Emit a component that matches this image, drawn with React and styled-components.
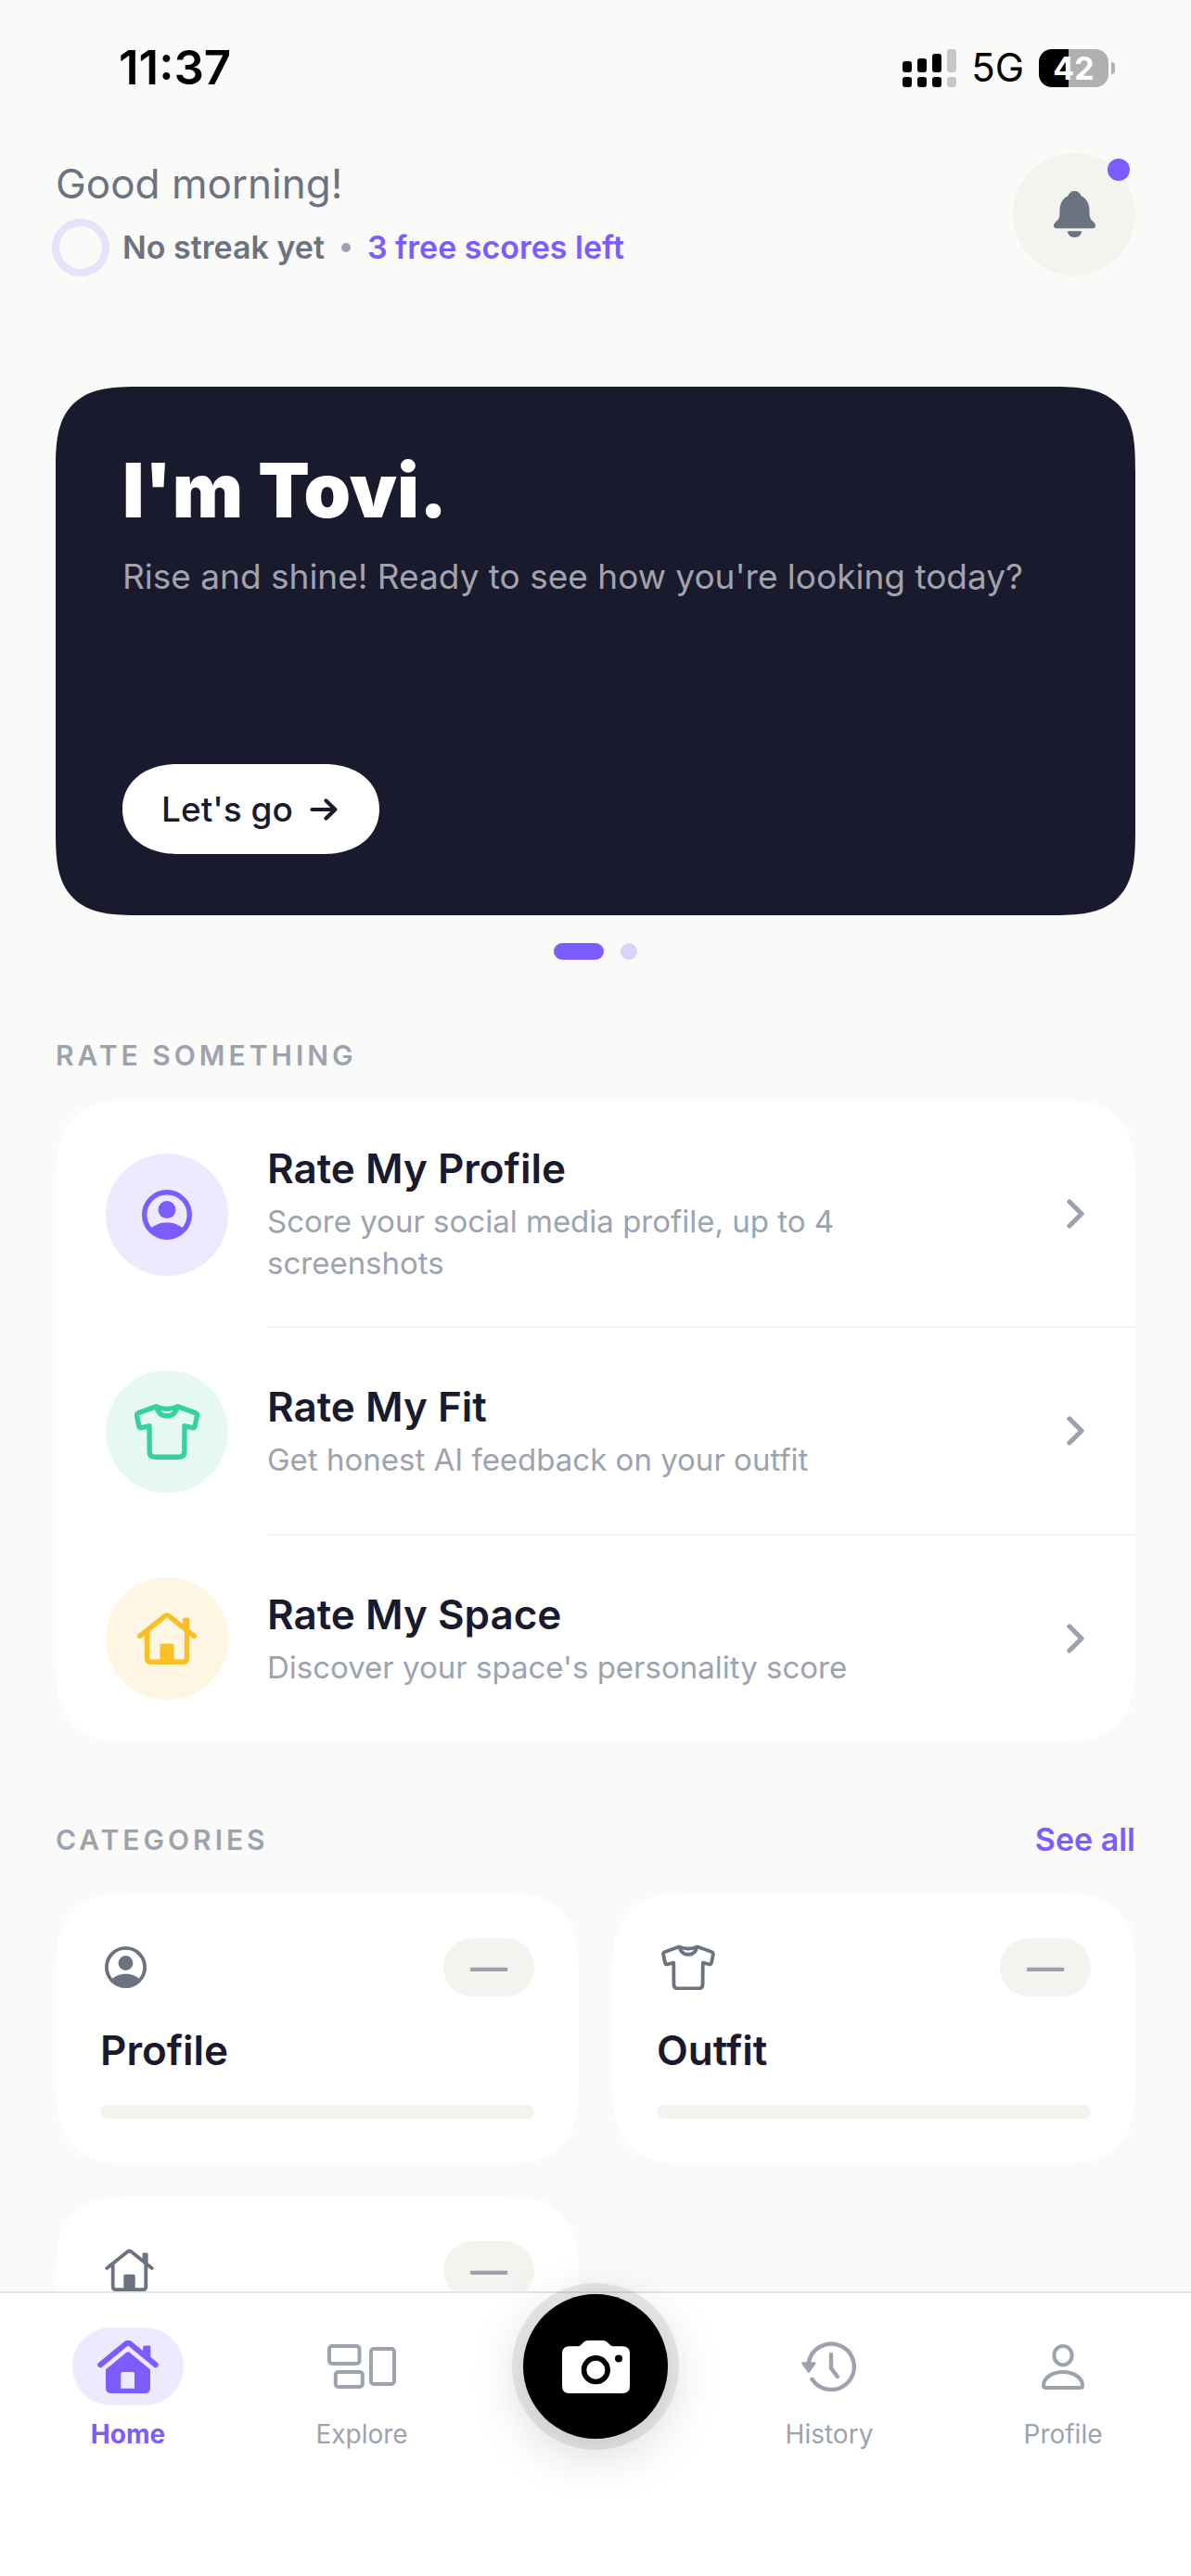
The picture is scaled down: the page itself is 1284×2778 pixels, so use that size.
import React, {useState} from 'react'
import styled, {createGlobalStyle, css} from 'styled-components'

const colors = {
    page: '#fafaf8',
    card: '#ffffff',
    ink: '#1a1a2e',
    muted: '#6b7280',
    faint: '#9ca3af',
    accent: '#7c5cff',
    accentSoft: '#edeaff',
    soft: '#f3f3ef',
}

const rateItems = [
    {id: 'profile', title: 'Rate My Profile', text: 'Score your social media profile, up to 4 screenshots', color: colors.accent, tint: colors.accentSoft},
    {id: 'outfit', title: 'Rate My Fit', text: 'Get honest AI feedback on your outfit', color: '#34d399', tint: '#e6f8f2'},
    {id: 'space', title: 'Rate My Space', text: "Discover your space's personality score", color: '#fbbf24', tint: '#fef6e3'},
]

const categories = [
    {id: 'profile', title: 'Profile', score: null},
    {id: 'outfit', title: 'Outfit', score: null},
    {id: 'space', title: 'Space', score: null},
]

const AccountIcon = ({width, stroke}) => (
    <svg width={width} viewBox="0 0 54 54" aria-hidden="true">
        <circle cx="27" cy="27" r={27 - stroke / 2} fill="none" stroke="currentColor" strokeWidth={stroke}/>
        <circle cx="27" cy="21.6" r="9.5" fill="currentColor"/>
        <path d="M9.5 42 C14 37.5 20.5 35.6 27 35.6 S40 37.5 44.5 42 C40 48 34 51.5 27 51.5 S14 48 9.5 42Z" fill="currentColor"/>
    </svg>
)

const ShirtIcon = ({width, stroke}) => (
    <svg width={width} viewBox="0 0 70 60" fill="none" stroke="currentColor" strokeWidth={stroke} strokeLinejoin="round" aria-hidden="true">
        <path d="M23.5 2.8 L4.6 9.6 Q2.2 10.5 2.6 12.8 L4.9 24 Q5.4 26.2 7.6 25.7 L16 23.8 L16.2 51.5 Q16.2 57.2 21.6 57.2 H48.4 Q53.8 57.2 53.8 51.5 L54 23.8 L62.4 25.7 Q64.6 26.2 65.1 24 L67.4 12.8 Q67.8 10.5 65.4 9.6 L46.5 2.8 C43 4.6 39 5.4 35 5.4 S27 4.6 23.5 2.8Z"/>
        <path d="M23.5 3 C25 9.5 29.5 13 35 13 S45 9.5 46.5 3"/>
    </svg>
)

const HouseIcon = ({width, stroke}) => (
    <svg width={width} viewBox="0 0 64 56" fill="none" stroke="currentColor" strokeWidth={stroke} strokeLinecap="round" strokeLinejoin="round" aria-hidden="true">
        <path d="M2.8 25.4 L29.6 3.9 Q32 2 34.4 3.9 L61.2 25.4"/>
        <path d="M10.5 20.5 V49.5 Q10.5 53.2 14.2 53.2 H49.8 Q53.5 53.2 53.5 49.5 V20.5"/>
        <path d="M24.5 53 V35.5 Q24.5 33.5 26.5 33.5 H37.5 Q39.5 33.5 39.5 35.5 V53Z" fill="currentColor" stroke="none"/>
        <path d="M49 17 V7.2 Q49 5.5 50.7 5.5 H54.6 Q56.3 5.5 56.3 7.2 V22Z" fill="currentColor" stroke="none"/>
    </svg>
)

const itemIcons = {profile: AccountIcon, outfit: ShirtIcon, space: HouseIcon}

const BellIcon = () => (
    <svg width="45" viewBox="0 0 45 50" fill="currentColor" aria-hidden="true">
        <path d="M22.5 0 C26 0 28.3 2 29.5 5.2 C35.2 7.8 38.5 13.5 38.5 21 C38.5 29 39.3 29.8 42.5 33 C44.5 35 45.2 36.5 45 38 Q44.7 40.3 42 40.3 H3 Q.3 40.3 0 38 C-.2 36.5 .5 35 2.5 33 C5.7 29.8 6.5 29 6.5 21 C6.5 13.5 9.8 7.8 15.5 5.2 C16.7 2 19 0 22.5 0Z"/>
        <path d="M15 43.2 H30 C30 47 27 50 22.5 50 S15 47 15 43.2Z"/>
    </svg>
)

const ArrowIcon = () => (
    <svg width="30" viewBox="0 0 30 24" fill="none" stroke="currentColor" strokeWidth="4.2" strokeLinecap="round" strokeLinejoin="round" aria-hidden="true">
        <path d="M2.5 12 H27 M17.5 2.5 L27.3 12 L17.5 21.5"/>
    </svg>
)

const ChevronIcon = () => (
    <svg width="20" viewBox="0 0 20 32" fill="none" stroke={colors.faint} strokeWidth="5.2" strokeLinecap="round" strokeLinejoin="round" aria-hidden="true">
        <path d="M3 3 L16 16 L3 29"/>
    </svg>
)

const HomeIcon = () => (
    <svg width="66" viewBox="0 0 66 57" fill="currentColor" aria-hidden="true">
        <path d="M3.2 26.2 L30.2 4 Q33 1.8 35.8 4 L62.8 26.2" fill="none" stroke="currentColor" strokeWidth="6" strokeLinecap="round" strokeLinejoin="round"/>
        <path d="M49.2 16 V7.2 Q49.2 5.4 51 5.4 H55.5 Q57.3 5.4 57.3 7.2 V22Z"/>
        <path fillRule="evenodd" d="M31.5 12.8 Q33 11.6 34.5 12.8 L57 31.2 V51 Q57 57 51 57 H15 Q9 57 9 51 V31.2Z M27 34 Q25.3 34 25.3 35.7 V51.8 H40 V35.7 Q40 34 38.3 34Z"/>
    </svg>
)

const ExploreIcon = () => (
    <svg width="74" viewBox="0 0 74 48" fill="none" stroke="currentColor" strokeWidth="4" aria-hidden="true">
        <rect x="2" y="2" width="32.5" height="19" rx="3"/>
        <rect x="8.8" y="30" width="29" height="16" rx="3"/>
        <rect x="47" y="5" width="25" height="38" rx="3"/>
    </svg>
)

const CameraIcon = () => (
    <svg width="73" viewBox="0 0 73 57" aria-hidden="true">
        <path d="M8 6.3 H17 C22 6.3 21 0 29 0 H43 C51 0 50 6.3 55.5 6.3 H65 Q73 6.3 73 14.3 V49 Q73 57 65 57 H8 Q0 57 0 49 V14.3 Q0 6.3 8 6.3Z" fill="#fff"/>
        <circle cx="36.3" cy="31.7" r="12.8" fill="#fff" stroke="#000" strokeWidth="5.6"/>
        <circle cx="61" cy="19.4" r="4" fill="#000"/>
    </svg>
)

const HistoryIcon = () => (
    <svg width="60" viewBox="0 0 60 54" fill="none" stroke="currentColor" strokeWidth="4.4" strokeLinecap="round" strokeLinejoin="round" aria-hidden="true">
        <path d="M7.6 24 A24.7 24.7 0 1 1 11.4 40.8"/>
        <path d="M32 14 V29 L38.8 38"/>
        <path d="M1.5 23.6 H14.3 L7.8 32.6Z" fill="currentColor" strokeWidth="2.6"/>
    </svg>
)

const PersonIcon = () => (
    <svg width="46" viewBox="0 0 46 49" fill="none" stroke="currentColor" strokeWidth="4" strokeLinejoin="round" aria-hidden="true">
        <ellipse cx="23" cy="12.2" rx="9.6" ry="10.2"/>
        <path d="M2 44.5 C2 36.5 11 30 23 30 S44 36.5 44 44.5 Q44 47 41.5 47 H4.5 Q2 47 2 44.5Z"/>
    </svg>
)

const SignalIcon = () => (
    <svg width="58" viewBox="0 0 58 41" aria-hidden="true">
        <rect y="13" width="10" height="12" rx="3"/>
        <rect x="16" y="10" width="10" height="15" rx="3"/>
        <rect x="32" y="5" width="10" height="20" rx="3"/>
        <rect x="48" width="10" height="25" rx="3" fill="#c7c7c6"/>
        <rect y="30" width="10" height="11" rx="3"/>
        <rect x="16" y="30" width="10" height="11" rx="3"/>
        <rect x="32" y="30" width="10" height="11" rx="3"/>
        <rect x="48" y="30" width="10" height="11" rx="3" fill="#c7c7c6"/>
    </svg>
)

const tabs = [
    {id: 'home', title: 'Home', Icon: HomeIcon},
    {id: 'explore', title: 'Explore', Icon: ExploreIcon},
    {id: 'camera'},
    {id: 'history', title: 'History', Icon: HistoryIcon},
    {id: 'me', title: 'Profile', Icon: PersonIcon},
]

const App = () => {
    const [tab, setTab] = useState('home')

    return (
        <Shell>
            <GlobalStyle/>
            <Scroll>
                <StatusBar>
                    <Clock>11:37</Clock>
                    <StatusGroup>
                        <SignalIcon/>
                        <Network>5G</Network>
                        <Battery><BatteryLevel>42</BatteryLevel></Battery>
                    </StatusGroup>
                </StatusBar>
                <Header>
                    <div>
                        <Greeting>Good morning!</Greeting>
                        <Streak>
                            <StreakRing/>
                            <span>No streak yet</span>
                            <StreakDot/>
                            <Free>3 free scores left</Free>
                        </Streak>
                    </div>
                    <BellButton aria-label="Notifications">
                        <BellIcon/>
                        <Unread/>
                    </BellButton>
                </Header>
                <Hero>
                    <HeroTitle>I'm Tovi.</HeroTitle>
                    <HeroText>Rise and shine! Ready to see how you're looking today?</HeroText>
                    <HeroButton>Let's go <ArrowIcon/></HeroButton>
                </Hero>
                <Pager>
                    <PagerDot $active/>
                    <PagerDot/>
                </Pager>
                <Section>
                    <SectionTitle>RATE SOMETHING</SectionTitle>
                    <RateCard>
                        {rateItems.map(item => {
                            const Icon = itemIcons[item.id]
                            return (
                                <RateRow key={item.id}>
                                    <RateIcon $color={item.color} $tint={item.tint}>
                                        <Icon width={item.id === 'profile' ? 54 : item.id === 'outfit' ? 70 : 64} stroke={5.4}/>
                                    </RateIcon>
                                    <RateBody>
                                        <div>
                                            <ItemTitle>{item.title}</ItemTitle>
                                            <RateText>{item.text}</RateText>
                                        </div>
                                        <ChevronIcon/>
                                    </RateBody>
                                </RateRow>
                            )
                        })}
                    </RateCard>
                </Section>
                <Section>
                    <SectionHead>
                        <SectionTitle>CATEGORIES</SectionTitle>
                        <SeeAll href="#categories">See all</SeeAll>
                    </SectionHead>
                    <CategoryGrid>
                        {categories.map(item => {
                            const Icon = itemIcons[item.id]
                            return (
                                <CategoryCard key={item.id}>
                                    <CategoryTop>
                                        <Icon width={item.id === 'profile' ? 45 : item.id === 'outfit' ? 58 : 53} stroke={4.6}/>
                                        <Score>{item.score || '—'}</Score>
                                    </CategoryTop>
                                    <ItemTitle>{item.title}</ItemTitle>
                                    <Track/>
                                </CategoryCard>
                            )
                        })}
                    </CategoryGrid>
                </Section>
            </Scroll>
            <TabBar>
                {tabs.map(({id, title, Icon}) => id === 'camera' ?
                    <CameraButton key={id} aria-label="Camera"><CameraIcon/></CameraButton>
                    :
                    <Tab key={id} $active={tab === id} onClick={() => setTab(id)}>
                        <TabIcon $active={tab === id}><Icon/></TabIcon>
                        {title}
                    </Tab>
                )}
            </TabBar>
        </Shell>
    )
}

const GlobalStyle = createGlobalStyle`
    * {
        box-sizing: border-box;
    }
    body {
        margin: 0;
        background: ${colors.page};
        color: ${colors.ink};
        font-family: Inter, "Liberation Sans", sans-serif;
    }
    h1, h2, h3, p {
        margin: 0;
    }
    button {
        border: 0;
        padding: 0;
        font-family: inherit;
        cursor: pointer;
    }
    svg {
        display: block;
        flex-shrink: 0;
    }
`

// continuous corners where the browser has them
const smoothCorners = css`
    border-radius: 60px;
    @supports (corner-shape: squircle) {
        border-radius: 92px;
        corner-shape: superellipse(1.6);
    }
`

const Shell = styled.div`
    display: flex;
    flex-direction: column;
    height: 100vh;
`

const Scroll = styled.main`
    flex: 1;
    min-height: 0;
    overflow-y: auto;
    scrollbar-width: none;
    padding: 0 60px 60px;
`

const StatusBar = styled.div`
    display: flex;
    justify-content: space-between;
    align-items: center;
    padding: 42px 22px 61px 68px;
    color: #000;
`

const Clock = styled.time`
    font-size: 51px;
    line-height: 62px;
    font-weight: 600;
`

const StatusGroup = styled.div`
    display: flex;
    align-items: center;
    gap: 16px;
`

const Network = styled.span`
    font-size: 42px;
    line-height: 48px;
`

const Battery = styled.div`
    position: relative;
    width: 75px;
    margin-right: 7px;
    &::after {
        content: '';
        position: absolute;
        top: 14px;
        right: -7px;
        width: 4px;
        height: 13px;
        border-radius: 0 6px 6px 0;
        background: #b0b0af;
    }
`

const BatteryLevel = styled.div`
    border-radius: 14px;
    background: linear-gradient(90deg, #000 43%, #b0b0af 43%);
    color: #fff;
    text-align: center;
    font-size: 34px;
    line-height: 41px;
    font-weight: 700;
`

const Header = styled.header`
    display: flex;
    justify-content: space-between;
    align-items: center;
`

const Greeting = styled.p`
    color: ${colors.muted};
    font-size: 44px;
    line-height: 60px;
`

const Streak = styled.div`
    display: flex;
    align-items: center;
    margin-top: 12px;
    color: ${colors.muted};
    font-size: 34px;
    line-height: 54px;
    font-weight: 600;
`

const StreakRing = styled.span`
    width: 54px;
    height: 54px;
    margin-right: 18px;
    border: 4px solid #e7e1fb;
    outline: 4px solid #e7e1fb;
    border-radius: 50%;
`

const StreakDot = styled.span`
    width: 10px;
    height: 10px;
    margin: 0 18px;
    border-radius: 50%;
    background: ${colors.faint};
`

const Free = styled.span`
    color: ${colors.accent};
`

const BellButton = styled.button`
    position: relative;
    display: grid;
    place-items: center;
    width: 132px;
    height: 132px;
    border-radius: 50%;
    background: ${colors.soft};
    color: ${colors.muted};
`

const Unread = styled.span`
    position: absolute;
    top: 6px;
    right: 6px;
    width: 24px;
    height: 24px;
    border-radius: 50%;
    background: ${colors.accent};
`

const Hero = styled.section`
    display: flex;
    flex-direction: column;
    align-items: flex-start;
    min-height: 570px;
    margin-top: 120px;
    padding: 66px 72px;
    background: ${colors.ink};
    ${smoothCorners}
`

const HeroTitle = styled.h1`
    color: #fff;
    font-size: 81px;
    line-height: 92px;
    font-weight: 900;
`

const HeroText = styled.p`
    margin-top: 20px;
    color: #a3a3ab;
    font-size: 37px;
    line-height: 54px;
`

const HeroButton = styled.button`
    display: flex;
    align-items: center;
    gap: 18px;
    margin-top: auto;
    padding: 0 45px 0 42px;
    border-radius: 49px;
    background: #fff;
    color: ${colors.ink};
    font-size: 37px;
    line-height: 97px;
    font-weight: 500;
    @supports (corner-shape: squircle) {
        border-radius: 60px / 49px;
        corner-shape: superellipse(1.1);
    }
`

const Pager = styled.div`
    display: flex;
    justify-content: center;
    gap: 18px;
    padding: 30px 0 6px;
`

const PagerDot = styled.span`
    width: ${props => props.$active ? '54px' : '18px'};
    height: 18px;
    border-radius: 9px;
    background: ${props => props.$active ? colors.accent : '#dad2fb'};
`

const Section = styled.section`
    margin-top: 76px;
`

const SectionHead = styled.div`
    display: flex;
    justify-content: space-between;
    align-items: center;
    height: 60px;
    margin-bottom: 28px;
    h2 {
        margin: 0;
    }
`

const SectionTitle = styled.h2`
    margin-bottom: 28px;
    color: ${colors.faint};
    font-size: 30px;
    line-height: 42px;
    font-weight: 600;
    letter-spacing: 4px;
`

const SeeAll = styled.a`
    color: ${colors.accent};
    font-size: 34px;
    line-height: 48px;
    font-weight: 600;
    text-decoration: none;
`

const RateCard = styled.div`
    background: ${colors.card};
    overflow: hidden;
    ${smoothCorners}
`

const RateBody = styled.div`
    flex: 1;
    display: flex;
    justify-content: space-between;
    align-items: center;
    gap: 60px;
    min-height: 222px;
    padding: 45px 54px 45px 0;
`

const RateRow = styled.div`
    display: flex;
    align-items: center;
    gap: 42px;
    padding-left: 54px;
    &:not(:last-child) ${RateBody} {
        min-height: 224px;
        border-bottom: 2px solid #f3f3f3;
    }
`

const RateIcon = styled.div`
    display: grid;
    place-items: center;
    flex-shrink: 0;
    width: 132px;
    height: 132px;
    border-radius: 50%;
    background: ${props => props.$tint};
    color: ${props => props.$color};
`

const ItemTitle = styled.h3`
    font-size: 44px;
    line-height: 57px;
    font-weight: 600;
`

const RateText = styled.p`
    max-width: 680px;
    margin-top: 6px;
    color: ${colors.faint};
    font-size: 33px;
    line-height: 45px;
`

const CategoryGrid = styled.div`
    display: grid;
    grid-template-columns: 1fr 1fr;
    gap: 36px;
`

const CategoryCard = styled.div`
    display: flex;
    flex-direction: column;
    gap: 30px;
    padding: 48px;
    background: ${colors.card};
    ${smoothCorners}
`

const CategoryTop = styled.div`
    display: flex;
    justify-content: space-between;
    align-items: center;
    padding-left: 5px;
    color: ${colors.muted};
`

const Score = styled.span`
    min-width: 98px;
    border-radius: 32px;
    background: ${colors.soft};
    color: ${colors.faint};
    text-align: center;
    font-size: 40px;
    line-height: 63px;
    font-weight: 600;
`

const Track = styled.div`
    height: 15px;
    border-radius: 8px;
    background: ${colors.soft};
`

const TabBar = styled.nav`
    position: relative;
    display: grid;
    grid-template-columns: repeat(5, 1fr);
    justify-items: center;
    align-items: start;
    padding: 37px 12px 135px;
    border-top: 2px solid #e5e5e8;
    background: #fff;
`

const Tab = styled.button`
    display: flex;
    flex-direction: column;
    align-items: center;
    gap: 13px;
    background: none;
    color: ${props => props.$active ? colors.accent : colors.faint};
    font-size: 28px;
    line-height: 36px;
    font-weight: ${props => props.$active ? 700 : 400};
`

const TabIcon = styled.span`
    display: grid;
    place-items: center;
    width: 120px;
    height: 84px;
    border-radius: 42px;
    background: ${props => props.$active ? colors.accentSoft : 'none'};
`

const CameraButton = styled.button`
    display: grid;
    place-items: center;
    width: 156px;
    height: 156px;
    margin-top: -36px;
    border-radius: 50%;
    background: #000;
    box-shadow: 0 0 0 12px rgba(0, 0, 0, .08), 0 12px 60px rgba(0, 0, 0, .18);
`

export default App
